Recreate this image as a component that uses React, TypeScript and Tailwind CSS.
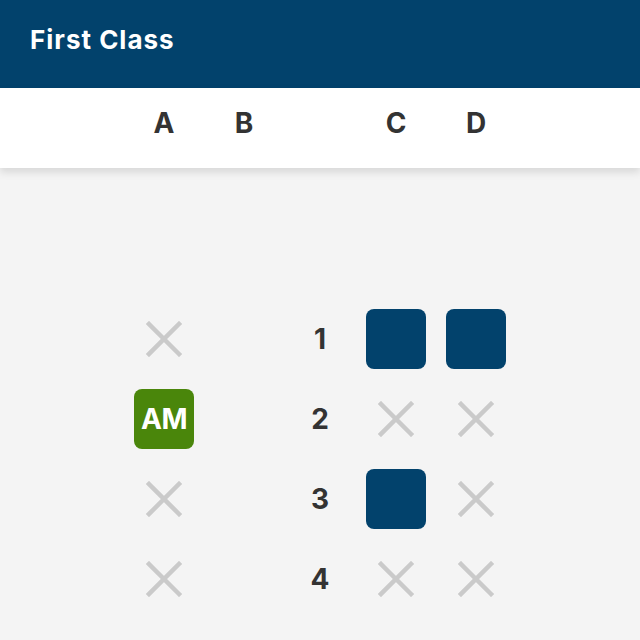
import React from 'react';

type Seat = 'taken' | 'open' | 'me' | 'none';

const ROWS: { num: number; seats: Seat[] }[] = [
  { num: 1, seats: ['taken', 'none', 'open', 'open'] },
  { num: 2, seats: ['me', 'none', 'taken', 'taken'] },
  { num: 3, seats: ['taken', 'none', 'open', 'taken'] },
  { num: 4, seats: ['taken', 'none', 'taken', 'taken'] },
];

const Cross = () => (
  <svg width="36" height="36" viewBox="0 0 36 36" className="text-[#cacaca]">
    <path d="M3 3 L33 33 M33 3 L3 33" stroke="currentColor" strokeWidth="4.5" strokeLinecap="square" fill="none" />
  </svg>
);

const SeatCell: React.FC<{ seat: Seat }> = ({ seat }) => {
  if (seat === 'open') return <div className="w-[60px] h-[60px] rounded-lg bg-[#02426c]" />;
  if (seat === 'me')
    return (
      <div className="w-[60px] h-[60px] rounded-lg bg-[#4a860b] flex items-center justify-center text-white text-[28px] leading-none font-bold tracking-[-0.5px]">
        AM
      </div>
    );
  if (seat === 'taken')
    return (
      <div className="w-[60px] h-[60px] flex items-center justify-center">
        <Cross />
      </div>
    );
  return <div className="w-[60px] h-[60px]" />;
};

export default function App() {
  return (
    <div className="w-[640px] h-[640px] overflow-hidden bg-[#f4f4f4] font-['Inter',sans-serif]">
      <div className="h-[88px] bg-[#02426c] flex items-center px-[30px]">
        <h1 className="text-white text-[26px] leading-none font-bold -mt-[8px] tracking-[1px]">First Class</h1>
      </div>
      <div className="h-[80px] bg-white shadow-[0_4px_8px_rgba(0,0,0,0.12)] flex justify-center items-center text-[#333333] text-[28px] leading-none font-bold relative">
        <div className="flex -mt-[10px]">
          <div className="w-[60px] text-center">A</div>
          <div className="w-[20px]" />
          <div className="w-[60px] text-center">B</div>
          <div className="w-[16px]" />
          <div className="w-[60px]" />
          <div className="w-[16px]" />
          <div className="w-[60px] text-center">C</div>
          <div className="w-[20px]" />
          <div className="w-[60px] text-center">D</div>
        </div>
      </div>
      <div className="pt-[141px] flex flex-col items-center gap-[20px]">
        {ROWS.map((row) => (
          <div key={row.num} className="flex items-center">
            <SeatCell seat={row.seats[0]} />
            <div className="w-[20px]" />
            <SeatCell seat={row.seats[1]} />
            <div className="w-[16px]" />
            <div className="w-[60px] text-center text-[#333333] text-[28px] leading-none font-bold">{row.num}</div>
            <div className="w-[16px]" />
            <SeatCell seat={row.seats[2]} />
            <div className="w-[20px]" />
            <SeatCell seat={row.seats[3]} />
          </div>
        ))}
      </div>
    </div>
  );
}
